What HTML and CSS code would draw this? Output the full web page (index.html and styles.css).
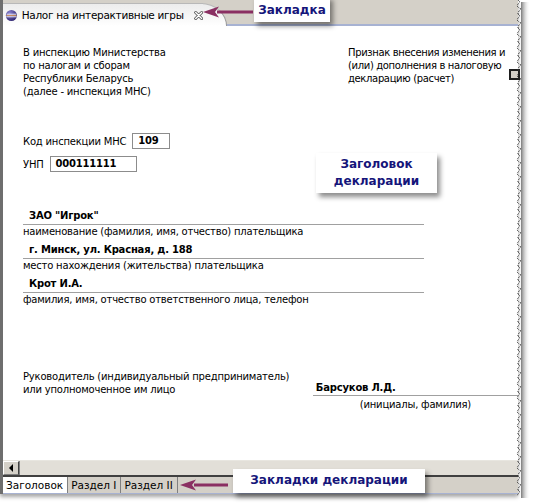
FILE: index.html
```html
<!DOCTYPE html>
<html lang="ru">
<head>
<meta charset="utf-8">
<title>Налог на интерактивные игры</title>
<link rel="stylesheet" href="styles.css">
</head>
<body>
<div class="frame">
  <div class="topbar">
    <div class="doc-tab">
      <svg class="doc-icon" width="15" height="15" viewBox="0 0 15 15">
        <defs>
          <radialGradient id="gl" cx="0.35" cy="0.3" r="0.8">
            <stop offset="0" stop-color="#8a84d0"/>
            <stop offset="1" stop-color="#2a1f6a"/>
          </radialGradient>
        </defs>
        <circle cx="7.5" cy="7.5" r="6.5" fill="url(#gl)"/>
        <path d="M2 6h11M1.5 9h12" stroke="#ffffff" stroke-width="1"/>
        <path d="M1.5 7.5h12" stroke="#f0a040" stroke-width="0.8"/>
      </svg>
      <span class="doc-title">Налог на интерактивные игры</span>
      <svg class="doc-close" width="11" height="11" viewBox="0 0 11 11">
        <path d="M2 2l7 7M9 2l-7 7" stroke="#555555" stroke-width="3.6" stroke-linecap="round"/>
        <path d="M2 2l7 7M9 2l-7 7" stroke="#ffffff" stroke-width="1.6" stroke-linecap="round"/>
      </svg>
    </div>
    <div class="tab-curve"></div>
  </div>

  <div class="content">
    <div class="head">
      <div class="addr">В инспекцию Министерства<br>по налогам и сборам<br>Республики Беларусь<br>(далее - инспекция МНС)</div>
      <div class="flag">
        <div class="flag-text">Признак внесения изменения и<br>(или) дополнения в налоговую<br>декларацию (расчет)</div>
        <span class="checkbox"></span>
      </div>
    </div>

    <div class="codes">
      <div class="code-row"><span>Код инспекции МНС</span><span class="box box-code">109</span></div>
      <div class="code-row"><span>УНП</span><span class="box box-unp">000111111</span></div>
    </div>

    <div class="payer">
      <div class="field">
        <div class="value">ЗАО "Игрок"</div>
        <div class="caption">наименование (фамилия, имя, отчество) плательщика</div>
      </div>
      <div class="field">
        <div class="value">г. Минск, ул. Красная, д. 188</div>
        <div class="caption">место нахождения (жительства) плательщика</div>
      </div>
      <div class="field">
        <div class="value">Крот И.А.</div>
        <div class="caption">фамилия, имя, отчество ответственного лица, телефон</div>
      </div>
    </div>

    <div class="sign">
      <div class="sign-role">Руководитель (индивидуальный предприниматель)<br>или уполномоченное им лицо</div>
      <div class="sign-name">
        <div class="sign-value">Барсуков Л.Д.</div>
        <div class="sign-caption">(инициалы, фамилия)</div>
      </div>
    </div>

    <div class="callout callout-header">Заголовок<br>декларации</div>
  </div>

  <div class="hscroll">
    <span class="scroll-btn"><svg width="5" height="8" viewBox="0 0 5 8"><path d="M4 0v8L0 4z" fill="#000"/></svg></span>
    <span class="scroll-track"></span>
  </div>

  <div class="sheet-tabs">
    <span class="sheet-tab active">Заголовок</span>
    <span class="sheet-tab">Раздел I</span>
    <span class="sheet-tab">Раздел II</span>
  </div>

  <div class="callout callout-tab">Закладка</div>
  <div class="callout callout-sheets">Закладки декларации</div>

  <svg class="arrow arrow-top" width="50" height="12" viewBox="0 0 50 12">
    <path d="M14 6H50" stroke="#8a2f62" stroke-width="3"/>
    <path d="M0 6L16 0.5L12 6L16 11.5z" fill="#8a2f62"/>
  </svg>
  <svg class="arrow arrow-bottom" width="48" height="12" viewBox="0 0 48 12">
    <path d="M14 6H48" stroke="#8a2f62" stroke-width="3"/>
    <path d="M0 6L16 0.5L12 6L16 11.5z" fill="#8a2f62"/>
  </svg>

  <svg class="torn" width="16" height="500" viewBox="0 0 16 500">
    <defs>
      <pattern id="tear" width="8" height="14" patternUnits="userSpaceOnUse">
        <path d="M3 0L5 2L3 4L2 6L4 8L6 9L4 11L3 13L3 14" stroke="#2b2b2b" stroke-width="1" fill="none" stroke-dasharray="1 1"/>
      </pattern>
      <linearGradient id="sh" x1="0" x2="1">
        <stop offset="0" stop-color="#7a7a7a"/>
        <stop offset="1" stop-color="#ffffff" stop-opacity="0"/>
      </linearGradient>
    </defs>
    <rect x="6" y="2" width="9" height="496" fill="url(#sh)"/>
    <rect x="0" y="0" width="8" height="496" fill="url(#tear)"/>
  </svg>
</div>
</body>
</html>
```

FILE: styles.css
```css
* { box-sizing: border-box; }

html, body {
  margin: 0;
  padding: 0;
  background: #ffffff;
}

body {
  font-family: "DejaVu Sans", "Liberation Sans", sans-serif;
  font-size: 10px;
  letter-spacing: -0.2px;
  color: #000000;
  width: 535px;
  height: 503px;
  overflow: hidden;
}

.frame {
  position: relative;
  width: 518px;
  height: 494px;
  display: flex;
  flex-direction: column;
  border-left: 3px solid #6e6e6e;
  box-shadow: 0 3px 4px rgba(0, 0, 0, 0.35);
}

/* top document tab bar */
.topbar {
  position: relative;
  height: 26px;
  flex: none;
  background: #d4d0c8;
  border-bottom: 2px solid #a7b2d2;
  display: flex;
  align-items: flex-end;
}

.doc-tab {
  position: relative;
  z-index: 1;
  height: 23px;
  width: 200px;
  margin-bottom: -2px;
  padding: 0 0 0 2px;
  display: flex;
  align-items: center;
  gap: 4px;
  background: linear-gradient(#ececec, #ffffff);
  border-top: 1px solid #b8b8b8;
}

.doc-title {
  font-size: 10.5px;
  letter-spacing: -0.3px;
  white-space: nowrap;
}

.doc-close { margin-left: 6px; }

.tab-curve {
  width: 26px;
  height: 23px;
  margin-bottom: -2px;
  background: linear-gradient(#ececec, #ffffff);
  border-top: 1px solid #b8b8b8;
  border-right: 1px solid #9a9a9a;
  border-top-right-radius: 26px 23px;
  margin-left: -2px;
}

/* main white sheet */
.content {
  position: relative;
  flex: 1;
  background: #ffffff;
  padding: 20px 0 0 20px;
  line-height: 13px;
}

.head {
  display: grid;
  grid-template-columns: 325px 1fr;
}

.flag {
  display: flex;
  align-items: flex-start;
}

.flag-text { white-space: nowrap; letter-spacing: -0.35px; }

.checkbox {
  width: 11px;
  height: 11px;
  margin: 23px 0 0 4px;
  background: #d4d0c8;
  border: 2px solid #1e1e1e;
  flex: none;
}

.codes {
  margin-top: 35px;
  display: flex;
  flex-direction: column;
  gap: 7px;
}

.code-row {
  display: flex;
  align-items: center;
  gap: 6px;
}

.box {
  height: 16px;
  line-height: 14px;
  border: 1px solid #8c8c8c;
  font-weight: bold;
  padding-left: 5px;
}

.box-code { width: 38px; }
.box-unp { width: 87px; }

.payer {
  margin-top: 37px;
  width: 401px;
}

.field { margin-bottom: 5px; }

.value {
  font-weight: bold;
  padding: 0 0 2px 6px;
  border-bottom: 1px solid #a0a0a0;
}

.caption {
  white-space: nowrap;
}

.sign {
  margin-top: 64px;
  display: flex;
}

.sign-role {
  width: 291px;
  white-space: nowrap;
}

.sign-name {
  margin-top: 11px;
  width: 206px;
  display: flex;
  flex-direction: column;
}

.sign-value {
  font-weight: bold;
  padding: 0 0 1px 3px;
  border-bottom: 1px solid #a0a0a0;
}

.sign-caption {
  padding-top: 2px;
  text-align: center;
}

/* horizontal scrollbar */
.hscroll {
  flex: none;
  height: 15px;
  display: flex;
  border-top: 1px solid #e8e6e0;
  background: #d4d0c8;
}

.scroll-btn {
  width: 16px;
  height: 14px;
  display: flex;
  align-items: center;
  justify-content: center;
  background: #d4d0c8;
  border-top: 1px solid #ffffff;
  border-left: 1px solid #ffffff;
  border-right: 1px solid #404040;
  border-bottom: 1px solid #808080;
}

.scroll-track {
  flex: 1;
  background: #e2dfd8;
  border-left: 1px solid #808080;
}

/* bottom sheet tabs */
.sheet-tabs {
  flex: none;
  height: 19px;
  display: flex;
  background: #d4d0c8;
  border-top: 2px solid #404040;
  border-bottom: 1px solid #a7b2d2;
}

.sheet-tab {
  padding: 0 4px 0 3px;
  line-height: 16px;
  font-size: 10.5px;
  letter-spacing: 0;
  border-right: 1px solid #808080;
}

.sheet-tab.active { background: #ffffff; }

/* annotations */
.callout {
  position: absolute;
  z-index: 3;
  background: #ffffff;
  color: #15157a;
  font-weight: bold;
  font-size: 12px;
  letter-spacing: 0;
  line-height: 17px;
  text-align: center;
  box-shadow: 3px 4px 5px rgba(0, 0, 0, 0.45);
}

.callout-header {
  left: 313px;
  top: 127px;
  width: 121px;
  height: 40px;
  padding-top: 3px;
}

.callout-tab {
  left: 251px;
  top: -4px;
  width: 76px;
  height: 26px;
  padding-top: 6px;
}

.callout-sheets {
  left: 230px;
  top: 469px;
  width: 192px;
  height: 24px;
  padding-top: 3px;
}

.arrow {
  position: absolute;
  z-index: 2;
}

.arrow-top { left: 200px; top: 6px; }
.arrow-bottom { left: 177px; top: 479px; }

.torn {
  position: absolute;
  z-index: 4;
  left: 512px;
  top: 0;
}
```
